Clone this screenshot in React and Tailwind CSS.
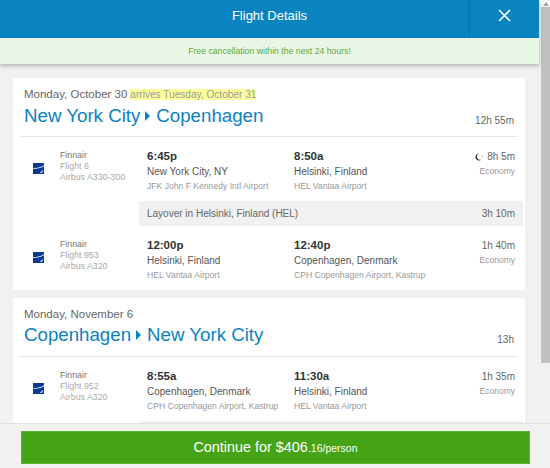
const FONT = "font-['Liberation_Sans',Arial,sans-serif]";

function Logo() {
  return (
    <svg width="11" height="11" viewBox="0 0 11 11" className="block">
      <rect width="11" height="11" fill="#0b3a94" />
      <path d="M0 5.2 C4 5 7 4.6 11 2.2 L11 3.2 C8 5 4 6 0 6 Z" fill="#e8eefa" />
      <path d="M7 10 C8 8.6 9 7.6 10.5 6.8 C10 8 9.4 9 8.6 10 Z" fill="#e8eefa" />
    </svg>
  );
}

function Moon() {
  return (
    <svg width="9" height="8" viewBox="0 0 10 9" className="inline-block mr-[3px] mb-[1px]">
      <path d="M4.5 0.3 A4.1 4.1 0 1 0 7.4 7.3 A3.6 3.6 0 0 1 4.5 0.3 Z" fill="#333" />
      <circle cx="8" cy="3" r="0.6" fill="#555" />
      <circle cx="8.8" cy="5" r="0.5" fill="#777" />
    </svg>
  );
}

function Stop({ time, city, airport }) {
  return (
    <div className="w-[147px] shrink-0">
      <div className="text-[11.5px] leading-[16px] font-bold text-[#333]">{time}</div>
      <div className="text-[10px] leading-[16px] text-[#555]">{city}</div>
      <div className="text-[8.6px] leading-[12px] text-[#999] whitespace-nowrap">{airport}</div>
    </div>
  );
}

function Leg({ flight, plane, dep, arr, dur, moon }) {
  return (
    <div className="flex h-[64px]">
      <div className="w-[47px] shrink-0 pl-[20px] pt-[26px]">
        <Logo />
      </div>
      <div className="w-[87px] shrink-0 text-[8.8px] leading-[11px] pt-[13px]">
        <div className="text-[#777]">Finnair</div>
        <div className="text-[#aaa]">{flight}</div>
        <div className="text-[#aaa]">{plane}</div>
      </div>
      <div className="flex pt-[11px]">
        <Stop {...dep} />
        <Stop {...arr} />
      </div>
      <div className="w-[74px] shrink-0 text-right pt-[12px]">
        <div className="text-[10px] leading-[16px] text-[#666] whitespace-nowrap">{moon && <Moon />}{dur}</div>
        <div className="text-[8.5px] leading-[12px] text-[#999]">Economy</div>
      </div>
    </div>
  );
}

function Arrow() {
  return <span className="inline-block ml-[5px] mr-[6px] w-0 h-0 border-y-[5px] border-y-transparent border-l-[5px] border-l-[#0a83c1]" />;
}

function CardHead({ date, extra, from, to, dur }) {
  return (
    <div className="mx-[7px] h-[59px] pl-[4px] pr-[4px] border-b border-[#e6e6e6]">
      <div className="pt-[9px] text-[11.5px] leading-[14px] text-[#666] whitespace-nowrap">
        {date}
        {extra && <span className="ml-[3px] text-[10.1px] bg-[#ffff99] text-[#999]">{extra}</span>}
      </div>
      <div className="flex items-end justify-between mt-[1px]">
        <div className="text-[18.7px] leading-[25px] text-[#0a83c1] flex items-center whitespace-nowrap">
          {from}<Arrow />{to}
        </div>
        <div className="text-[10px] leading-[14px] text-[#666]">{dur}</div>
      </div>
    </div>
  );
}

export default function App() {
  return (
    <div className={`${FONT} flex w-[550px] h-[468px] overflow-hidden bg-[#f1f1f1]`}>
      <div className="w-[541px] shrink-0 flex flex-col h-full">
        <div className="relative z-10 w-[539px] shadow-[0_2px_4px_rgba(0,0,0,0.25)]">
          <div className="relative h-[38px] bg-[#0a83c1] border-b border-[#0a78b2]">
            <div className="text-center text-[13px] leading-[32px] text-white">Flight Details</div>
            <div className="absolute right-0 top-0 bottom-0 w-[70px] border-l border-[#0a74ad] flex items-center justify-center pb-[6px]">
              <svg width="13" height="13" viewBox="0 0 13 13">
                <path d="M1 1 L12 12 M12 1 L1 12" stroke="#fff" strokeWidth="1.6" fill="none" />
              </svg>
            </div>
          </div>
          <div className="h-[26px] bg-[#e9f6e5] text-center text-[8.7px] leading-[26px] text-[#5cab3c]">
            Free cancellation within the next 24 hours!
          </div>
        </div>
        <div className="flex-1 min-h-0 overflow-hidden pl-[13px] pr-[14px] pt-[14px]">
          <div className="w-[512px] bg-white h-[212px]">
            <CardHead date="Monday, October 30" extra="arrives Tuesday, October 31" from="New York City" to="Copenhagen" dur="12h 55m" />
            <Leg flight="Flight 6" plane="Airbus A330-300" moon
              dep={{ time: "6:45p", city: "New York City, NY", airport: "JFK John F Kennedy Intl Airport" }}
              arr={{ time: "8:50a", city: "Helsinki, Finland", airport: "HEL Vantaa Airport" }} dur="8h 5m" />
            <div className="ml-[126px] mr-[2px] h-[25px] bg-[#f1f1f1] flex items-center justify-between pl-[8px] pr-[8px] text-[10px] text-[#666]">
              <span>Layover in Helsinki, Finland (HEL)</span><span>3h 10m</span>
            </div>
            <Leg flight="Flight 953" plane="Airbus A320"
              dep={{ time: "12:00p", city: "Helsinki, Finland", airport: "HEL Vantaa Airport" }}
              arr={{ time: "12:40p", city: "Copenhagen, Denmark", airport: "CPH Copenhagen Airport, Kastrup" }} dur="1h 40m" />
          </div>
          <div className="w-[512px] bg-white mt-[8px]">
            <CardHead date="Monday, November 6" from="Copenhagen" to="New York City" dur="13h" />
            <Leg flight="Flight 952" plane="Airbus A320"
              dep={{ time: "8:55a", city: "Copenhagen, Denmark", airport: "CPH Copenhagen Airport, Kastrup" }}
              arr={{ time: "11:30a", city: "Helsinki, Finland", airport: "HEL Vantaa Airport" }} dur="1h 35m" />
            <div className="ml-[126px] mr-[2px] h-[25px] bg-[#f1f1f1]" />
          </div>
        </div>
        <div className="h-[45px] shrink-0 bg-[#f1f1f1] border-t border-[#e0e0e0] relative w-[550px] pl-[21px] pt-[7px]">
          <div className="w-[509px] h-[33px] bg-[#46a316] border border-[#5bb52e] text-center text-white text-[14.4px] leading-[30px]">
            Continue for $406<span className="text-[10.5px]">.16/person</span>
          </div>
        </div>
      </div>
      <div className="w-[9px] shrink-0 h-[422px] flex flex-col items-center">
        <div className="h-[7px] w-full bg-[#f7f7f7] flex items-center justify-center">
          <div className="w-0 h-0 border-x-[3px] border-x-transparent border-b-[4px] border-b-[#a3a3a3]" />
        </div>
        <div className="w-full h-[356px] bg-[#c1c1c1]" />
      </div>
    </div>
  );
}
